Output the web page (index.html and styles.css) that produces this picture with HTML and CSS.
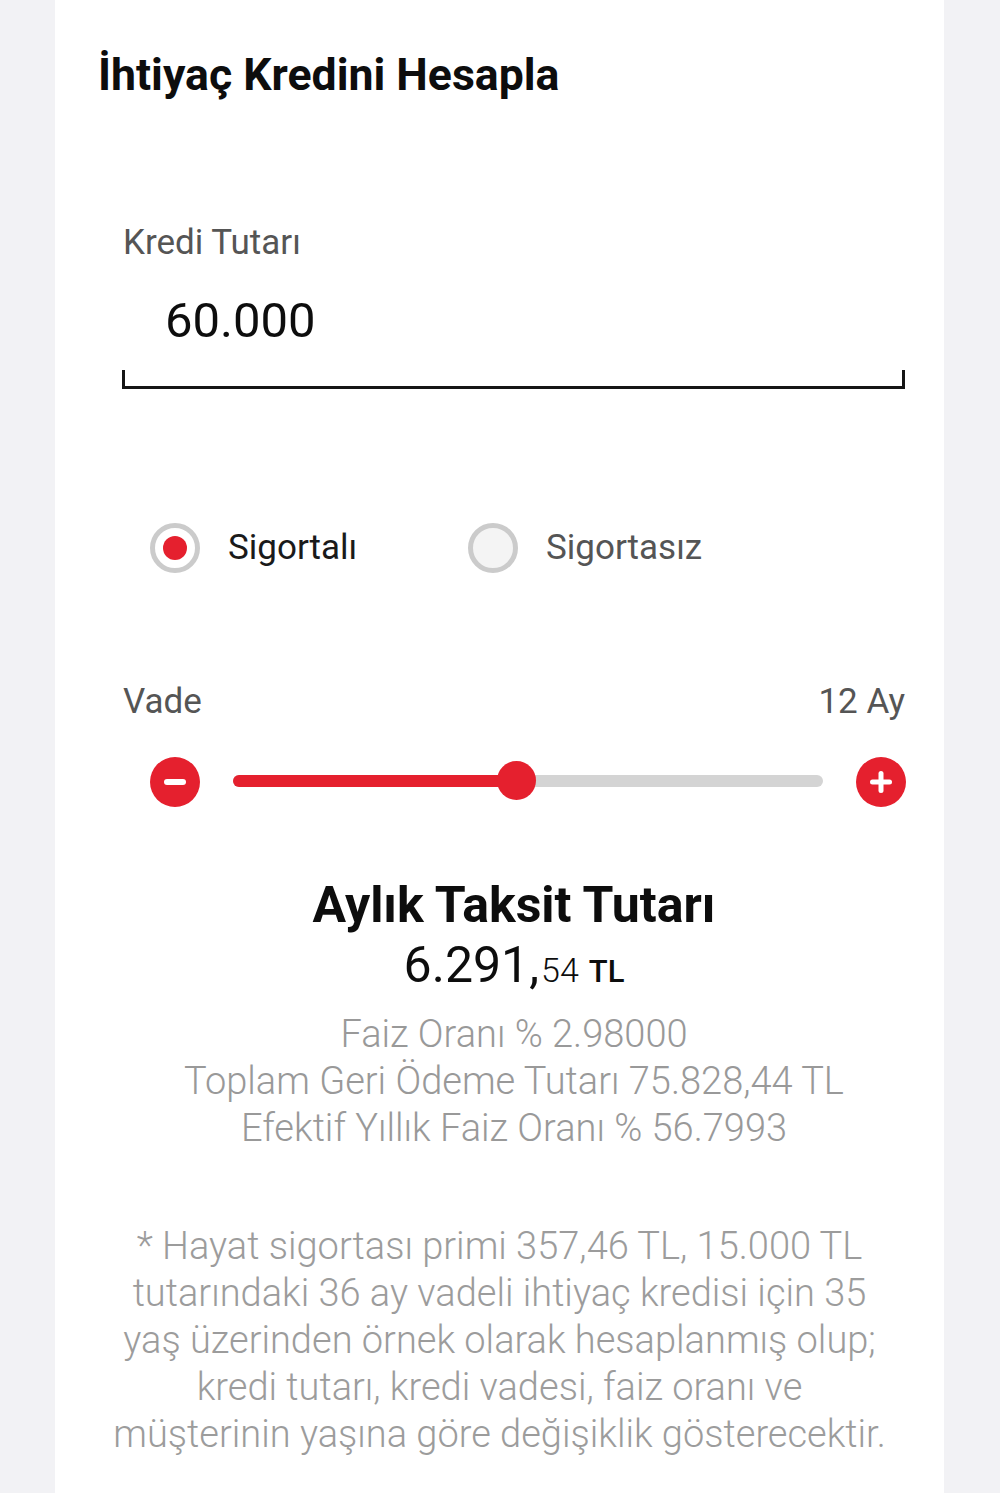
FILE: index.html
```html
<!DOCTYPE html>
<html lang="tr">
<head>
<meta charset="utf-8">
<title>İhtiyaç Kredini Hesapla</title>
<link rel="stylesheet" href="styles.css">
</head>
<body>
<main class="card">
  <h1 class="title">İhtiyaç Kredini Hesapla</h1>

  <section class="form">
    <div class="field">
      <div class="field-label">Kredi Tutarı</div>
      <div class="field-value">60.000</div>
      <div class="field-line"></div>
    </div>

    <div class="radios">
      <label class="option">
        <span class="radio radio-on"><span class="radio-dot"></span></span>
        <span class="option-text option-text-on">Sigortalı</span>
      </label>
      <label class="option">
        <span class="radio"></span>
        <span class="option-text">Sigortasız</span>
      </label>
    </div>

    <div class="term-head">
      <span>Vade</span>
      <span>12 Ay</span>
    </div>

    <div class="slider">
      <span class="step-btn">
        <svg viewBox="0 0 50 50" width="50" height="50"><rect x="14" y="22" width="22" height="6" rx="3" fill="#fff"/></svg>
      </span>
      <div class="track">
        <div class="track-fill" style="width: 48%"></div>
        <span class="thumb" style="left: 48%"></span>
      </div>
      <span class="step-btn">
        <svg viewBox="0 0 50 50" width="50" height="50"><rect x="14" y="22.5" width="22" height="5" rx="2.5" fill="#fff"/><rect x="22.5" y="14" width="5" height="22" rx="2.5" fill="#fff"/></svg>
      </span>
    </div>

    <div class="result">
      <div class="result-title">Aylık Taksit Tutarı</div>
      <div class="result-amount">6.291,<span class="cents">54</span><span class="currency">TL</span></div>
      <div class="result-details">
        <div>Faiz Oranı % 2.98000</div>
        <div>Toplam Geri Ödeme Tutarı 75.828,44 TL</div>
        <div>Efektif Yıllık Faiz Oranı % 56.7993</div>
      </div>
    </div>
  </section>

  <p class="note">* Hayat sigortası primi 357,46 TL, 15.000 TL<br>tutarındaki 36 ay vadeli ihtiyaç kredisi için 35<br>yaş üzerinden örnek olarak hesaplanmış olup;<br>kredi tutarı, kredi vadesi, faiz oranı ve<br>müşterinin yaşına göre değişiklik gösterecektir.</p>
</main>
</body>
</html>
```

FILE: styles.css
```css
* { box-sizing: border-box; }

html, body {
  margin: 0;
  padding: 0;
}

body {
  background: #f2f2f5;
  font-family: Roboto, "Noto Sans", "DejaVu Sans", sans-serif;
  color: #111;
}

.card {
  margin-left: 55px;
  width: 889px;
  min-height: 1493px;
  background: #fff;
  padding-top: 49px;
}

.title {
  margin: 0 0 0 43px;
  font-size: 44.6px;
  line-height: 52px;
  font-weight: 700;
  color: #0d0d0d;
}

.form {
  margin-left: 68px;
  width: 782px;
}

.field {
  margin-top: 122px;
}

.field-label {
  font-size: 35px;
  line-height: 40px;
  color: #555;
}

.field-value {
  margin-top: 30px;
  padding-left: 42px;
  font-size: 49px;
  line-height: 56px;
  color: #0d0d0d;
}

.field-line {
  margin-top: 21px;
  margin-left: -1px;
  height: 19px;
  border: 3px solid #151515;
  border-top: 0;
}

.radios {
  margin-top: 134px;
  padding-left: 27px;
  display: flex;
}

.option {
  width: 318px;
  display: flex;
  align-items: center;
  gap: 28px;
}

.radio {
  width: 50px;
  height: 50px;
  border-radius: 50%;
  border: 5px solid #cbcbcb;
  background: #f4f4f4;
  display: flex;
  align-items: center;
  justify-content: center;
  flex: none;
}

.radio-on {
  background: #fff;
}

.radio-dot {
  width: 24px;
  height: 24px;
  border-radius: 50%;
  background: #e5202e;
}

.option-text {
  font-size: 35px;
  line-height: 50px;
  color: #555;
}

.option-text-on {
  color: #1a1a1a;
}

.term-head {
  margin-top: 109px;
  display: flex;
  justify-content: space-between;
  font-size: 35px;
  line-height: 40px;
  color: #555;
}

.slider {
  margin-top: 35px;
  margin-left: 27px;
  width: 756px;
  display: flex;
  align-items: center;
  gap: 33px;
}

.step-btn {
  width: 50px;
  height: 50px;
  border-radius: 50%;
  background: #e5202e;
  flex: none;
  display: block;
}

.step-btn svg {
  display: block;
}

.track {
  position: relative;
  flex: 1;
  height: 12px;
  border-radius: 6px;
  background: #d4d4d4;
  margin-top: -3px;
}

.track-fill {
  height: 12px;
  border-radius: 6px;
  background: #e5202e;
}

.thumb {
  position: absolute;
  top: 50%;
  width: 39px;
  height: 39px;
  margin: -19.5px 0 0 -19.5px;
  border-radius: 50%;
  background: #e5202e;
}

.result {
  margin-top: 68px;
  text-align: center;
}

.result-title {
  font-size: 50px;
  line-height: 60px;
  font-weight: 700;
  color: #0d0d0d;
}

.result-amount {
  font-size: 50px;
  line-height: 60px;
  color: #0d0d0d;
}

.cents {
  font-size: 34px;
  font-weight: 300;
  margin-left: 2px;
}

.currency {
  font-size: 31px;
  font-weight: 500;
  margin-left: 10px;
}

.result-details {
  margin-top: 9px;
  font-size: 38px;
  line-height: 47px;
  font-weight: 300;
  color: #999;
}

.note {
  margin: 71px 0 0;
  text-align: center;
  font-size: 38px;
  line-height: 47px;
  font-weight: 300;
  color: #9c9c9c;
}
```
